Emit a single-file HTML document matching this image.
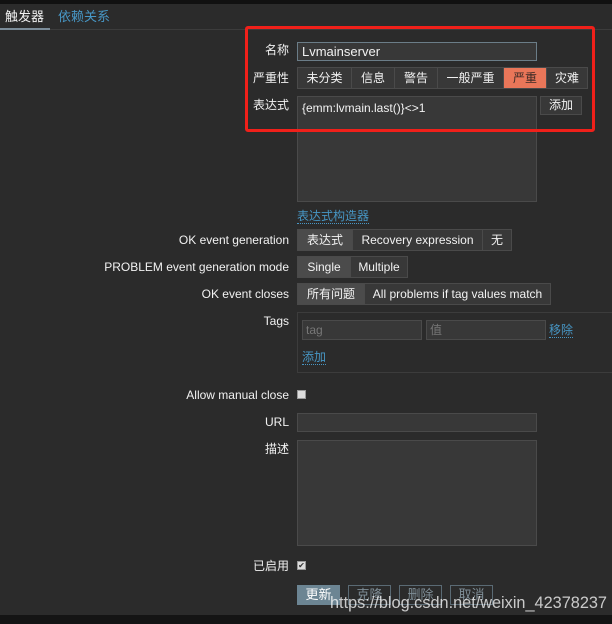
<!DOCTYPE html>
<html><head><meta charset="utf-8"><style>
*{margin:0;padding:0;box-sizing:border-box}
body{width:612px;height:624px;background:#2b2b2b;position:relative;overflow:hidden;font-family:"Liberation Sans","Noto Sans CJK SC",sans-serif;font-size:12px;color:#f2f2f2}
.a{position:absolute}
.lab{position:absolute;right:323px;text-align:right;white-space:nowrap;line-height:14px}
.in{position:absolute;background:#383838;border:1px solid #4a4a4a}
.bg{position:absolute;display:flex;height:22px;border:1px solid #4a4a4a;background:#383838}
.bg span{border-right:1px solid #4a4a4a;line-height:20px;text-align:center;padding:0 6px;white-space:nowrap}
.bg span:last-child{border-right:none}
.sel{background:#4b4b4b}
.btn{position:absolute;height:20px;line-height:18px;text-align:center;border:1px solid #5a6a74;color:#7f8e97;font-size:13px}
.cb{position:absolute;width:9px;height:9px;background:#ddd;border:1px solid #999}
.link{color:#4796c4;border-bottom:1px dotted #4796c4}
</style></head><body>
<div class="a" style="left:0;top:0;width:612px;height:4px;background:#111"></div>
<div class="a" style="left:0;top:29px;width:612px;height:1px;background:#3c3c3c"></div>
<div class="a" style="left:0;top:28px;width:50px;height:2px;background:#7b8c99"></div>
<div class="a" style="left:5px;top:6px;font-size:13px">触发器</div>
<div class="a" style="left:58px;top:6px;font-size:13px;color:#4796c4">依赖关系</div>

<div class="lab" style="top:43px">名称</div>
<div class="in" style="left:297px;top:42px;width:240px;height:19px;border-color:#6b7d88;padding-left:4px;line-height:17px;font-size:13px">Lvmainserver</div>
<div class="lab" style="top:71px">严重性</div>
<div class="bg" style="left:297px;top:67px;height:22px">
<span style="width:54px">未分类</span><span style="width:43px">信息</span><span style="width:43px">警告</span><span style="width:66px">一般严重</span><span style="width:43px;background:#e97659;color:#3a2a25">严重</span><span style="width:40px">灾难</span></div>
<div class="lab" style="top:98px">表达式</div>
<div class="in" style="left:297px;top:96px;width:240px;height:106px;padding:4px;line-height:14px">{emm:lvmain.last()}&lt;&gt;1</div>
<div class="a" style="left:540px;top:96px;width:42px;height:19px;border:1px solid #4a4a4a;background:#383838;text-align:center;line-height:17px">添加</div>
<div class="a" style="left:245px;top:26px;width:350px;height:106px;border:3px solid #f0201a;border-radius:3px"></div>
<div class="a" style="left:297px;top:207px"><span class="link">表达式构造器</span></div>

<div class="lab" style="top:233px">OK event generation</div>
<div class="bg" style="left:297px;top:229px"><span class="sel" style="width:55px">表达式</span><span style="width:130px">Recovery expression</span><span style="width:28px">无</span></div>
<div class="lab" style="top:260px">PROBLEM event generation mode</div>
<div class="bg" style="left:297px;top:256px"><span class="sel" style="width:53px">Single</span><span style="width:56px">Multiple</span></div>
<div class="lab" style="top:287px">OK event closes</div>
<div class="bg" style="left:297px;top:283px"><span class="sel" style="width:67px">所有问题</span><span style="width:185px">All problems if tag values match</span></div>

<div class="lab" style="top:314px">Tags</div>
<div class="a" style="left:297px;top:312px;width:320px;height:61px;border:1px solid #3c3c3c"></div>
<div class="in" style="left:302px;top:320px;width:120px;height:20px;color:#777;padding-left:3px;line-height:18px">tag</div>
<div class="in" style="left:426px;top:320px;width:120px;height:20px;color:#777;padding-left:3px;line-height:18px">值</div>
<div class="a" style="left:549px;top:321px"><span class="link">移除</span></div>
<div class="a" style="left:302px;top:348px"><span class="link">添加</span></div>

<div class="lab" style="top:388px">Allow manual close</div>
<div class="cb" style="left:297px;top:390px"></div>
<div class="lab" style="top:415px">URL</div>
<div class="in" style="left:297px;top:413px;width:240px;height:19px"></div>
<div class="lab" style="top:442px">描述</div>
<div class="in" style="left:297px;top:440px;width:240px;height:106px"></div>
<div class="lab" style="top:559px">已启用</div>
<div class="cb" style="left:297px;top:561px;font-size:8px;line-height:7px;color:#333;text-align:center">✔</div>

<div class="btn" style="left:297px;top:585px;width:43px;background:#6c8593;border-color:#6c8593;color:#fff">更新</div>
<div class="btn" style="left:348px;top:585px;width:43px">克隆</div>
<div class="btn" style="left:399px;top:585px;width:43px">删除</div>
<div class="btn" style="left:450px;top:585px;width:43px">取消</div>
<div class="a" style="left:330px;top:594px;font-size:16.3px;color:rgba(255,255,255,0.75);white-space:nowrap">https://blog.csdn.net/weixin_42378237</div>
<div class="a" style="left:0;top:615px;width:612px;height:9px;background:#141414"></div>
</body></html>
